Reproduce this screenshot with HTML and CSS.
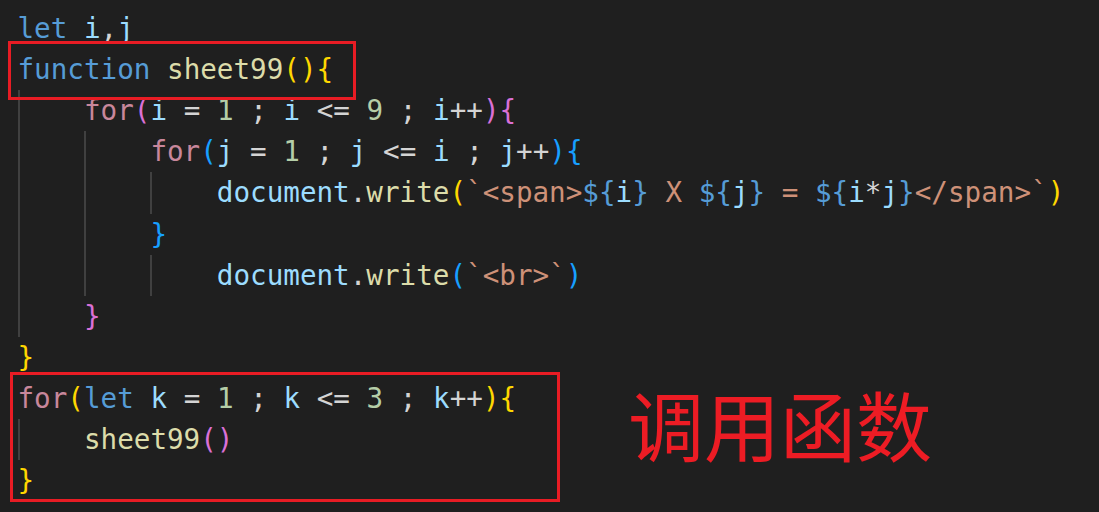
FILE: index.html
```html
<!DOCTYPE html>
<html lang="zh-CN">
<head>
<meta charset="utf-8">
<title>sheet99</title>
<link rel="stylesheet" href="styles.css">
</head>
<body>
<div class="editor">
  <div class="code">
    <div class="line"></div>
    <div class="line"><span class="kw">let</span> <span class="var">i</span><span class="op">,</span><span class="var">j</span></div>
    <div class="line"><span class="kw">function</span> <span class="fn">sheet99</span><span class="b1">(){</span></div>
    <div class="line"><span class="ind g"></span><span class="ctl">for</span><span class="b2">(</span><span class="var">i</span> <span class="op">=</span> <span class="num">1</span> <span class="op">;</span> <span class="var">i</span> <span class="op">&lt;=</span> <span class="num">9</span> <span class="op">;</span> <span class="var">i</span><span class="op">++</span><span class="b2">){</span></div>
    <div class="line"><span class="ind g"></span><span class="ind g"></span><span class="ctl">for</span><span class="b3">(</span><span class="var">j</span> <span class="op">=</span> <span class="num">1</span> <span class="op">;</span> <span class="var">j</span> <span class="op">&lt;=</span> <span class="var">i</span> <span class="op">;</span> <span class="var">j</span><span class="op">++</span><span class="b3">){</span></div>
    <div class="line"><span class="ind g"></span><span class="ind g"></span><span class="ind g"></span><span class="var">document</span><span class="op">.</span><span class="fn">write</span><span class="b1">(</span><span class="str">`&lt;span&gt;</span><span class="kw">${</span><span class="var">i</span><span class="kw">}</span><span class="str"> X </span><span class="kw">${</span><span class="var">j</span><span class="kw">}</span><span class="str"> = </span><span class="kw">${</span><span class="var">i</span><span class="op">*</span><span class="var">j</span><span class="kw">}</span><span class="str">&lt;/span&gt;`</span><span class="b1">)</span></div>
    <div class="line"><span class="ind g"></span><span class="ind g"></span><span class="b3">}</span></div>
    <div class="line"><span class="ind g"></span><span class="ind g"></span><span class="ind g"></span><span class="var">document</span><span class="op">.</span><span class="fn">write</span><span class="b3">(</span><span class="str">`&lt;br&gt;`</span><span class="b3">)</span></div>
    <div class="line"><span class="ind g"></span><span class="b2">}</span></div>
    <div class="line"><span class="b1">}</span></div>
    <div class="line"><span class="ctl">for</span><span class="b1">(</span><span class="kw">let</span> <span class="var">k</span> <span class="op">=</span> <span class="num">1</span> <span class="op">;</span> <span class="var">k</span> <span class="op">&lt;=</span> <span class="num">3</span> <span class="op">;</span> <span class="var">k</span><span class="op">++</span><span class="b1">){</span></div>
    <div class="line"><span class="ind g"></span><span class="fn">sheet99</span><span class="b2">()</span></div>
    <div class="line"><span class="b1">}</span></div>
    <div class="line"></div>
  </div>
  <div class="mark mark-fn"></div>
  <div class="mark mark-call"></div>
  <div class="note">调用函数</div>
</div>
</body>
</html>
```

FILE: styles.css
```css
html, body {
  margin: 0;
  padding: 0;
  background: #1f1f1f;
  overflow: hidden;
}

.editor {
  position: relative;
  width: 1099px;
  height: 512px;
  overflow: hidden;
  background: #1f1f1f;
}

.code {
  margin-top: -33px;
  padding-left: 17.5px;
  font-family: "DejaVu Sans Mono", "Liberation Mono", monospace;
  font-size: 27.6px;
  line-height: 41.1px;
  color: #d4d4d4;
}

.line {
  display: block;
  height: 41.1px;
  white-space: pre;
}

.ind {
  display: inline-block;
  width: 4ch;
  height: 41.1px;
  vertical-align: top;
  box-sizing: border-box;
}

.ind.g {
  border-left: 2px solid #404040;
}

.kw { color: #569cd6; }
.ctl { color: #c8879b; }
.var { color: #9cdcfe; }
.fn { color: #dcdcaa; }
.num { color: #b5cea8; }
.op { color: #d4d4d4; }
.str { color: #ce9178; }
.b1 { color: #ffd700; }
.b2 { color: #da70d6; }
.b3 { color: #179fff; }

.mark {
  position: absolute;
  border: 3px solid #e81c24;
  box-sizing: border-box;
}

.mark-fn {
  left: 8px;
  top: 40.5px;
  width: 348px;
  height: 59px;
}

.mark-call {
  left: 9.5px;
  top: 372px;
  width: 550px;
  height: 130px;
}

.note {
  position: absolute;
  left: 628px;
  top: 385px;
  font-family: "Noto Sans CJK SC", sans-serif;
  font-size: 76px;
  line-height: 76px;
  color: #ed1c24;
  white-space: nowrap;
}
```
